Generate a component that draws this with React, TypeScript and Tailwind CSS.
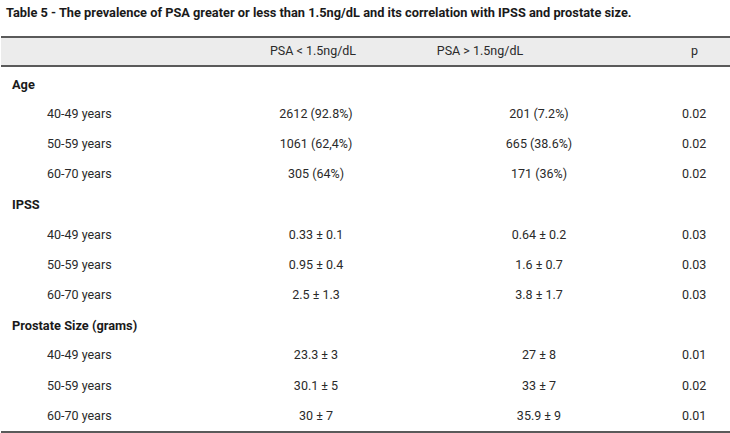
import React from "react";

type Row = { label: string; a: string; b: string; p: string };
type Section = { title: string; rows: Row[] };

const sections: Section[] = [
  {
    title: "Age",
    rows: [
      { label: "40-49 years", a: "2612 (92.8%)", b: "201 (7.2%)", p: "0.02" },
      { label: "50-59 years", a: "1061 (62,4%)", b: "665 (38.6%)", p: "0.02" },
      { label: "60-70 years", a: "305 (64%)", b: "171 (36%)", p: "0.02" },
    ],
  },
  {
    title: "IPSS",
    rows: [
      { label: "40-49 years", a: "0.33 ± 0.1", b: "0.64 ± 0.2", p: "0.03" },
      { label: "50-59 years", a: "0.95 ± 0.4", b: "1.6 ± 0.7", p: "0.03" },
      { label: "60-70 years", a: "2.5 ± 1.3", b: "3.8 ± 1.7", p: "0.03" },
    ],
  },
  {
    title: "Prostate Size (grams)",
    rows: [
      { label: "40-49 years", a: "23.3 ± 3", b: "27 ± 8", p: "0.01" },
      { label: "50-59 years", a: "30.1 ± 5", b: "33 ± 7", p: "0.02" },
      { label: "60-70 years", a: "30 ± 7", b: "35.9 ± 9", p: "0.01" },
    ],
  },
];

export default function App() {
  return (
    <div
      className="w-[730px] h-[433px] bg-white text-[#222] overflow-hidden"
      style={{ fontFamily: "Roboto, 'Liberation Sans', sans-serif" }}
    >
      <div className="pl-[6px] pt-[6px] h-[36px] text-[12.8px] font-bold leading-[14px] text-[#1a1a1a]">
        Table 5 - The prevalence of PSA greater or less than 1.5ng/dL and its correlation with IPSS and prostate size.
      </div>
      <div className="ml-[1px] w-[729px]">
        <div className="grid grid-cols-[231px_162px_172px_1fr] items-center h-[31px] bg-[#ececec] border-t-2 border-b-2 border-[#5a5a5a] text-[12.5px] text-[#2a2a2a]">
          <div />
          <div className="text-center">PSA &lt; 1.5ng/dL</div>
          <div className="text-center">PSA &gt; 1.5ng/dL</div>
          <div className="text-right pr-[32px]">p</div>
        </div>
        <div className="border-b-2 border-[#5a5a5a] pt-[2px]">
          {sections.map((s) => (
            <div key={s.title}>
              <div className="h-[30.2px] flex items-center pl-[11px] text-[12.8px] font-bold text-[#1a1a1a]">
                {s.title}
              </div>
              {s.rows.map((r) => (
                <div
                  key={r.label}
                  className="grid grid-cols-[235px_160px_286px_1fr] items-center h-[30.2px] text-[12.5px] text-[#2a2a2a]"
                >
                  <div className="pl-[46px]">{r.label}</div>
                  <div className="text-center">{r.a}</div>
                  <div className="text-center">{r.b}</div>
                  <div className="text-right pr-[24px]">{r.p}</div>
                </div>
              ))}
            </div>
          ))}
        </div>
      </div>
    </div>
  );
}
